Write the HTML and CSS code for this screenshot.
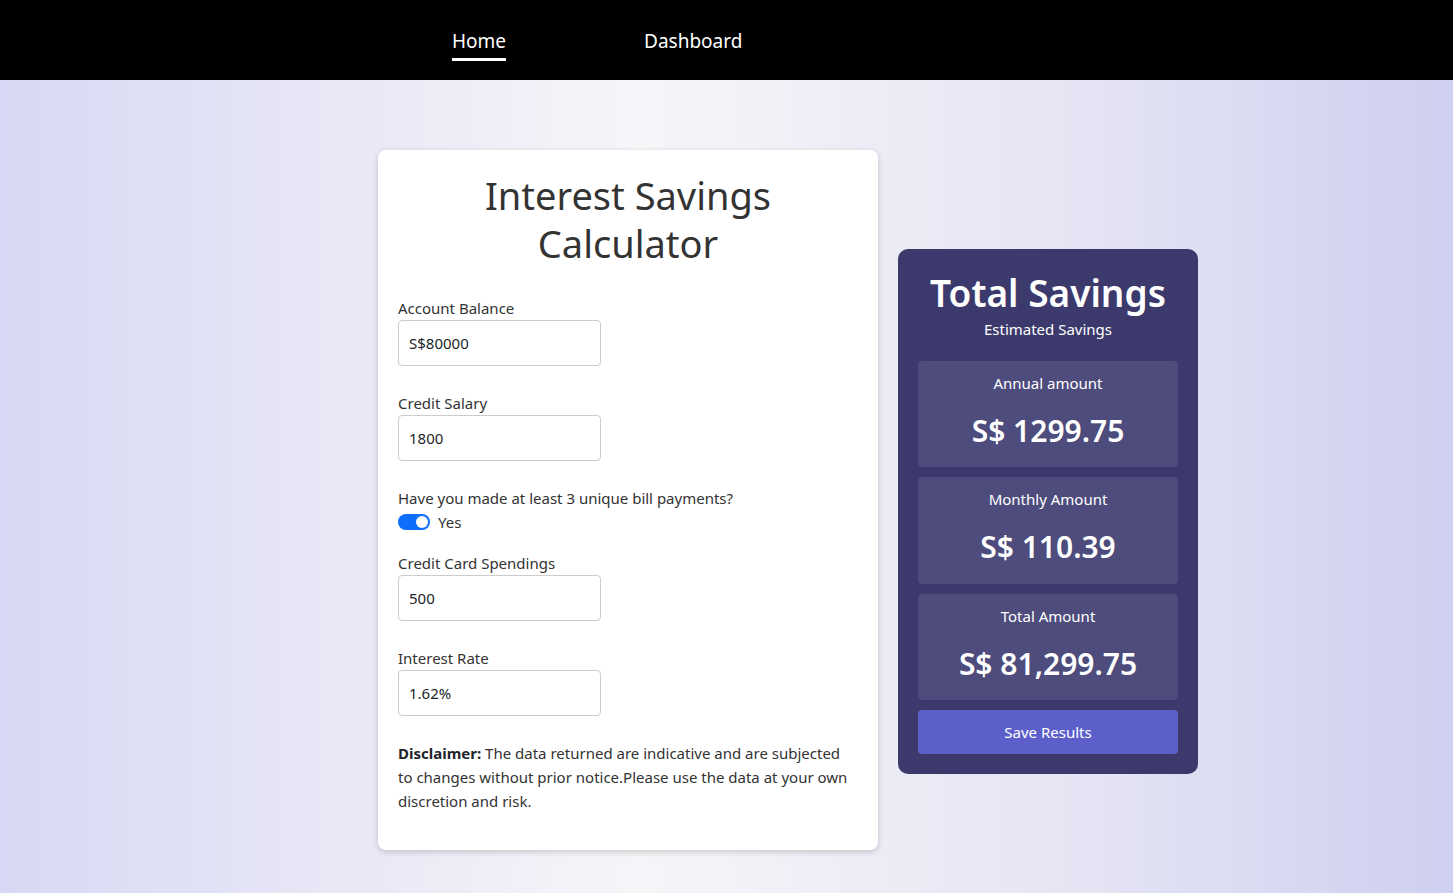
FILE: index.html
```html
<!DOCTYPE html>
<html lang="en">
<head>
<meta charset="utf-8">
<title>Interest Savings Calculator</title>
<link rel="stylesheet" href="styles.css">
</head>
<body>
<nav class="navbar">
  <a class="nav-link active" href="#">Home</a>
  <a class="nav-link" href="#">Dashboard</a>
</nav>
<main class="page">
  <section class="calc-card">
    <h1 class="calc-title">Interest Savings Calculator</h1>
    <div class="field">
      <label class="field-label">Account Balance</label>
      <input class="field-input" type="text" value="S$80000">
    </div>
    <div class="field">
      <label class="field-label">Credit Salary</label>
      <input class="field-input" type="text" value="1800">
    </div>
    <div class="field field-switch">
      <label class="field-label">Have you made at least 3 unique bill payments?</label>
      <div class="switch-row">
        <span class="switch"><span class="switch-knob"></span></span>
        <span class="switch-text">Yes</span>
      </div>
    </div>
    <div class="field">
      <label class="field-label">Credit Card Spendings</label>
      <input class="field-input" type="text" value="500">
    </div>
    <div class="field">
      <label class="field-label">Interest Rate</label>
      <input class="field-input" type="text" value="1.62%">
    </div>
    <p class="disclaimer"><strong>Disclaimer:</strong> The data returned are indicative and are subjected to changes without prior notice.Please use the data at your own discretion and risk.</p>
  </section>
  <aside class="result-card">
    <h2 class="result-title">Total Savings</h2>
    <p class="result-sub">Estimated Savings</p>
    <div class="result-box">
      <p class="box-label">Annual amount</p>
      <p class="box-value">S$ 1299.75</p>
    </div>
    <div class="result-box">
      <p class="box-label">Monthly Amount</p>
      <p class="box-value">S$ 110.39</p>
    </div>
    <div class="result-box">
      <p class="box-label">Total Amount</p>
      <p class="box-value">S$ 81,299.75</p>
    </div>
    <button class="save-btn">Save Results</button>
  </aside>
</main>
</body>
</html>
```
FILE: styles.css
```css
* { box-sizing: border-box; }
html, body { margin: 0; padding: 0; }
body {
  font-family: "Segoe UI", "Noto Sans", "Open Sans", sans-serif;
  font-size: 16px;
  line-height: 1.5;
  color: #212529;
  min-height: 893px;
  background: linear-gradient(90deg, #d8d8f4 0%, #f6f6f9 44%, #e4e4f4 75%, #cfcff0 100%);
}
.navbar {
  height: 80px;
  background: #000;
  display: flex;
  align-items: center;
  gap: 138px;
  padding-left: 452px;
}
.nav-link {
  color: #fff;
  text-decoration: none;
  font-size: 19px;
  line-height: 28px;
  padding-top: 3px;
  border-bottom: 3px solid transparent;
  padding-bottom: 3px;
  margin-top: 5px;
}
.nav-link.active { border-bottom-color: #fff; }

.page {
  display: flex;
  align-items: flex-start;
  gap: 20px;
  padding: 70px 0 40px 378px;
}
.calc-card {
  width: 500px;
  height: 700px;
  background: #fff;
  border-radius: 8px;
  box-shadow: 0 2px 6px rgba(0,0,0,0.18);
  padding: 21px 20px 20px;
}
.calc-title {
  margin: 0 0 29px;
  text-align: center;
  font-size: 38px;
  line-height: 48px;
  font-weight: 400;
  color: #333;
}
.field { margin-bottom: 25px; }
.field-switch { margin-bottom: 17px; }
.field-label {
  display: block;
  font-size: 15px;
  line-height: 24px;
  color: #333;
}
.field-input {
  display: block;
  width: 203px;
  height: 46px;
  border: 1px solid #ccc;
  border-radius: 4px;
  padding: 0 10px;
  font-family: inherit;
  font-size: 15px;
  color: #212529;
  background: #fff;
}
.switch-row {
  display: flex;
  align-items: center;
  gap: 8px;
  height: 24px;
}
.switch {
  width: 32px;
  height: 16px;
  border-radius: 8px;
  background: #0d6efd;
  display: flex;
  align-items: center;
  justify-content: flex-end;
  padding-right: 2px;
}
.switch-knob {
  width: 12px;
  height: 12px;
  border-radius: 50%;
  background: #fff;
}
.switch-text { font-size: 15px; color: #333; }
.disclaimer {
  margin: 0;
  font-size: 15px;
  line-height: 24px;
  color: #333;
}
.disclaimer strong { color: #212529; font-weight: 700; }

.result-card {
  width: 300px;
  margin-top: 99px;
  background: #3c3a6d;
  border-radius: 10px;
  padding: 20px;
  color: #fff;
  text-align: center;
}
.result-title {
  margin: 0;
  font-size: 37px;
  line-height: 48px;
  font-weight: 600;
}
.result-sub {
  margin: 0 0 20px;
  font-size: 15px;
  line-height: 24px;
}
.result-box {
  background: #4d4c7d;
  border-radius: 4px;
  padding: 10px 10px 17px;
  margin-bottom: 10px;
}
.box-label {
  margin: 0 0 16px;
  font-size: 15px;
  line-height: 24px;
}
.box-value {
  margin: 0;
  font-size: 30px;
  line-height: 39.3px;
  font-weight: 600;
}
.save-btn {
  display: block;
  width: 100%;
  height: 44px;
  border: none;
  border-radius: 4px;
  background: #5c5fca;
  color: #fff;
  font-family: inherit;
  font-size: 15px;
}
```
